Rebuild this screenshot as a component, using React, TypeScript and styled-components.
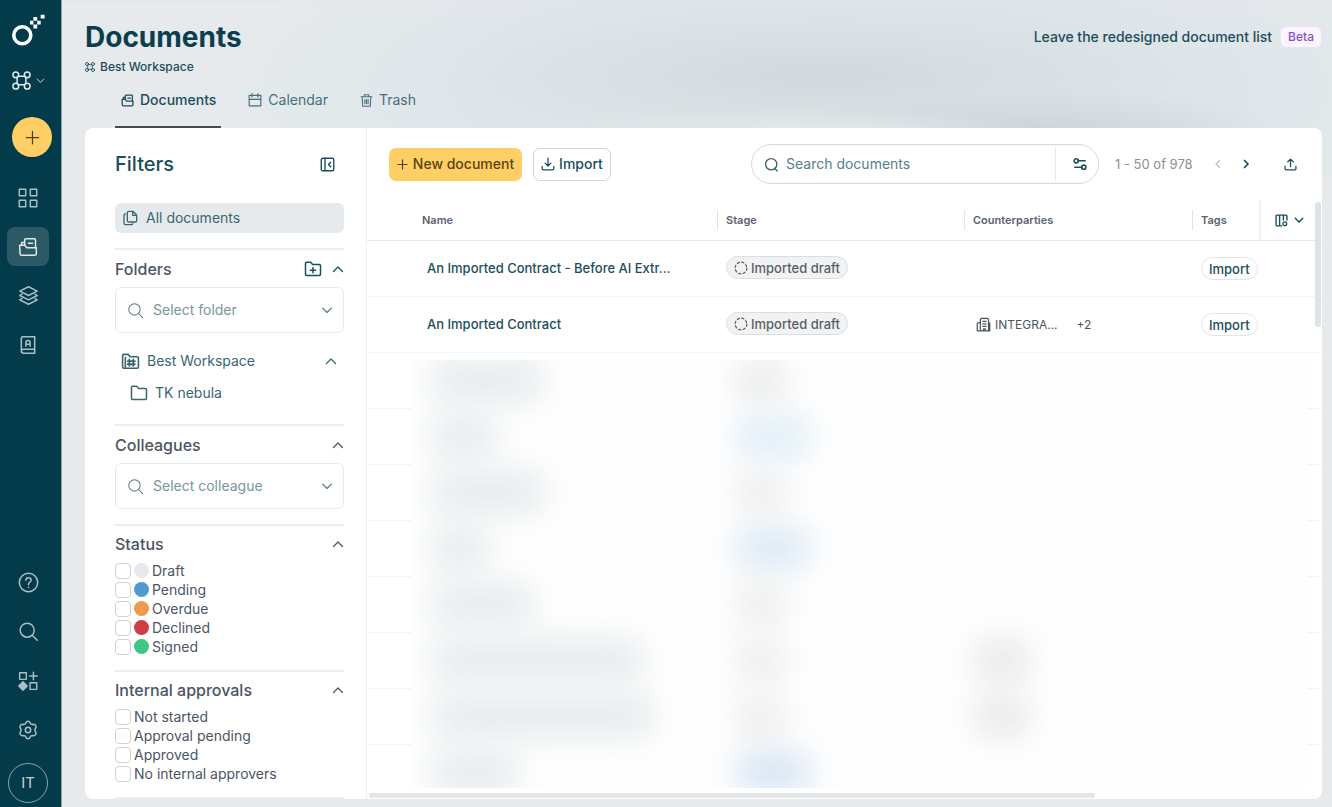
import React from "react";
import styled, { createGlobalStyle } from "styled-components";

const Global = createGlobalStyle`
  *, *::before, *::after { box-sizing: border-box; }
  body { margin: 0; background: #e6eaed; font-family: Inter, "Liberation Sans", sans-serif; font-size: 14px; line-height: 20px; color: #4b5563; }
  button, input, select { font: inherit; color: inherit; }
  button { padding: 0; border: 0; background: none; cursor: pointer; }
  h1, h2, h3 { margin: 0; }
  a { color: inherit; text-decoration: none; }
  svg { display: block; flex: none; }
`;

const teal = "#1b4d5b";

const Page = styled.div`
  display: flex;
  height: 100vh;
`;

const Sidebar = styled.nav`
  flex: none;
  width: 62px;
  display: flex;
  flex-direction: column;
  align-items: flex-start;
  padding: 12px 0 4px 7px;
  background: #043b4a;
  border-right: 1px solid #86a5ad;
  color: #a9c0c6;
`;

const LogoLink = styled.a`
  margin-left: 4px;
  color: #fff;
`;

const WorkspaceButton = styled.button`
  display: flex;
  align-items: center;
  gap: 5px;
  height: 24px;
  margin: 20px 0 25px 5px;
  color: #e1eaec;
`;

const CreateButton = styled.button`
  width: 40px;
  height: 40px;
  margin: 0 0 21px 5px;
  border-radius: 50%;
  display: grid;
  place-items: center;
  background: #ffcf66;
  color: #4a3f10;
`;

const NavItem = styled.a<{ $active?: boolean }>`
  width: 42px;
  height: 39px;
  margin-bottom: 10px;
  border-radius: 8px;
  display: grid;
  place-items: center;
  background: ${(p) => (p.$active ? "#2c5966" : "transparent")};
  color: ${(p) => (p.$active ? "#dfe9eb" : "inherit")};
`;

const Spacer = styled.div`
  flex: 1;
`;

const Avatar = styled.button`
  width: 40px;
  height: 40px;
  margin: 4px 0 0 1px;
  border: 1px solid #86a5ad;
  border-radius: 50%;
  font-size: 15px;
  color: #c3d2d6;
`;

const Main = styled.main`
  flex: 1;
  min-width: 0;
  display: flex;
  flex-direction: column;
  padding: 0 10px 8px 23px;
  border-top: 1px solid #e4e3f6;
  background:
    radial-gradient(ellipse 240px 26px at 58% 132px, #e4e9eb 0%, #e1e7e9aa 50%, #e0e6e800 100%),
    radial-gradient(ellipse 260px 44px at 76% 132px, #cbd4db 0%, #d0d8deaa 50%, #d5dde100 100%),
    radial-gradient(ellipse 360px 64px at 60% 74px, #d0d9de 0%, #d5dde199 50%, #dbe2e500 100%),
    radial-gradient(ellipse 640px 180px at 62% 84px, #d9e1e4 0%, #dee5e8 55%, #e6eaed00 100%),
    #e6eaed;
`;

const Header = styled.header`
  display: flex;
  justify-content: space-between;
  padding-top: 20px;
`;

const Title = styled.h1`
  font-size: 28px;
  line-height: 32px;
  font-weight: 700;
  color: #0b3f4e;
`;

const Crumb = styled.a`
  display: flex;
  align-items: center;
  gap: 5px;
  margin-top: 4px;
  font-size: 12px;
  line-height: 20px;
  font-weight: 500;
  color: ${teal};
`;

const Leave = styled.a`
  display: flex;
  align-items: center;
  gap: 8px;
  height: 32px;
  font-size: 14px;
  font-weight: 500;
  color: ${teal};
`;

const Beta = styled.span`
  padding: 0 7px;
  border: 1px solid #eedffb;
  border-radius: 6px;
  background: #faf5ff;
  font-size: 12px;
  color: #8b4fc8;
`;

const Tabs = styled.nav`
  display: flex;
  gap: 21px;
  height: 51px;
  padding-left: 30px;
`;

const Tab = styled.a<{ $active?: boolean }>`
  display: flex;
  align-items: center;
  gap: 6px;
  padding: 0 5px 3px 6px;
  border-bottom: 2px solid ${(p) => (p.$active ? "#3f4b50" : "transparent")};
  font-weight: ${(p) => (p.$active ? 500 : 400)};
  color: ${(p) => (p.$active ? teal : "#44707c")};
`;

const Card = styled.div`
  flex: 1;
  min-height: 0;
  display: flex;
  border-radius: 8px;
  overflow: hidden;
  background: #fff;
`;

const Filters = styled.aside`
  flex: none;
  width: 282px;
  padding: 16px 22px 0 30px;
  border-right: 1px solid #eef0f1;
  overflow: hidden;
`;

const FiltersHead = styled.div`
  display: flex;
  align-items: center;
  justify-content: space-between;
  height: 40px;
  padding-right: 9px;
  color: ${teal};
`;

const FiltersTitle = styled.h2`
  font-size: 20px;
  font-weight: 500;
`;

const AllDocs = styled.button`
  display: flex;
  align-items: center;
  gap: 8px;
  width: 100%;
  height: 30px;
  margin: 19px 0 15px;
  padding: 0 7px;
  border-radius: 6px;
  background: #e6eaed;
  color: #3a6672;
`;

const Section = styled.section<{ $list?: boolean }>`
  padding-bottom: ${(p) => (p.$list ? 14 : 15)}px;
  border-top: 2px solid #eceeef;
`;

const SectionHead = styled.div<{ $tight?: boolean }>`
  display: flex;
  align-items: center;
  justify-content: space-between;
  height: ${(p) => (p.$tight ? 35 : 37)}px;
  color: #4b5563;
`;

const SectionTitle = styled.h3`
  font-size: 16px;
  font-weight: 500;
`;

const HeadTools = styled.div`
  display: flex;
  align-items: center;
  gap: 10px;
  color: ${teal};
`;

const Combo = styled.label`
  display: flex;
  align-items: center;
  gap: 9px;
  height: 46px;
  padding: 0 10px 0 11px;
  border: 1px solid #e6e9ea;
  border-radius: 6px;
  color: #5f7f88;
`;

const ComboInput = styled.input`
  flex: 1;
  min-width: 0;
  padding: 0;
  border: 0;
  outline: 0;
  background: none;
  &::placeholder { color: #7a959d; opacity: 1; }
`;

const Tree = styled.ul`
  list-style: none;
  margin: 12px 0 0;
  padding: 0;
`;

const TreeRow = styled.li<{ $depth: number }>`
  display: flex;
  align-items: center;
  gap: 7px;
  height: 32px;
  padding: 0 7px 0 ${(p) => 6 + p.$depth * 9}px;
  color: #3a6672;
`;

const TreeLink = styled.a`
  flex: 1;
`;

const Check = styled.label`
  display: flex;
  align-items: center;
  gap: 3px;
  height: 19px;
  font-size: 14px;
  line-height: 19px;
`;

const Box = styled.input`
  appearance: none;
  width: 16px;
  height: 16px;
  margin: 0;
  border: 1px solid #ced2d6;
  border-radius: 4px;
  background: #fff;
`;

const Dot = styled.span<{ $color: string }>`
  width: 15px;
  height: 15px;
  border-radius: 50%;
  background: ${(p) => p.$color};
`;

const Content = styled.div`
  position: relative;
  flex: 1;
  min-width: 0;
  overflow: hidden;
`;

const Toolbar = styled.div`
  display: flex;
  align-items: center;
  height: 72px;
  padding: 0 24px 0 22px;
`;

const Primary = styled.button`
  display: flex;
  align-items: center;
  justify-content: center;
  gap: 5px;
  width: 133px;
  height: 33px;
  margin-right: 11px;
  border-radius: 7px;
  background: #ffcf66;
  font-weight: 500;
  color: #5a4310;
`;

const Secondary = styled.button`
  display: flex;
  align-items: center;
  justify-content: center;
  gap: 4px;
  width: 78px;
  height: 33px;
  border: 1px solid #cfd4d6;
  border-radius: 7px;
  font-weight: 500;
  color: ${teal};
`;

const Search = styled.div`
  display: flex;
  align-items: center;
  width: 348px;
  height: 40px;
  margin-left: auto;
  padding-left: 12px;
  border: 1px solid #d5d9db;
  border-radius: 20px;
  color: #3a6672;
`;

const SearchLabel = styled.label`
  display: flex;
  align-items: center;
  gap: 7px;
  flex: 1;
  min-width: 0;
`;

const SearchInput = styled(ComboInput)`
  &::placeholder { color: #55808b; }
`;

const SearchOptions = styled.button`
  width: 43px;
  height: 32px;
  display: grid;
  place-items: center;
  padding-right: 2px;
  padding-left: 8px;
  border-left: 1px solid #e6e8ea;
  color: ${teal};
`;

const Range = styled.span`
  width: 80px;
  margin-left: 16px;
  font-size: 13px;
  color: #8a9095;
  white-space: nowrap;
`;

const IconButton = styled.button<{ $gap: number; $muted?: boolean }>`
  width: 16px;
  height: 24px;
  margin-left: ${(p) => p.$gap}px;
  display: grid;
  place-items: center;
  color: ${(p) => (p.$muted ? "#b9bfc3" : teal)};
`;

const Table = styled.table`
  width: 100%;
  table-layout: fixed;
  border-collapse: separate;
  border-spacing: 0;
`;

const Th = styled.th<{ $first?: boolean; $w?: number }>`
  width: ${(p) => (p.$w ? `${p.$w}px` : "auto")};
  height: 41px;
  padding: 0 0 0 ${(p) => (p.$first ? 55 : 0)}px;
  border-bottom: 1px solid #e6e9ea;
  text-align: left;
  font-size: 11px;
  font-weight: 600;
  color: #5a6370;
`;

const ThLabel = styled.span`
  display: block;
  padding-left: 8px;
  border-left: 1px solid #e3e6e8;
`;

const ThTools = styled.button`
  display: flex;
  align-items: center;
  gap: 6px;
  width: 100%;
  height: 40px;
  padding-left: 14px;
  border-left: 2px solid #eff1f2;
  color: ${teal};
`;

const Td = styled.td<{ $pad?: number }>`
  height: 56px;
  padding: 0 0 0 ${(p) => p.$pad ?? 9}px;
  border-bottom: 1px solid #f3f5f5;
  font-size: 12px;
  white-space: nowrap;
`;

const DocLink = styled.a`
  font-size: 13px;
  font-weight: 500;
  color: ${teal};
`;

const Pill = styled.span<{ $tag?: boolean }>`
  display: inline-flex;
  align-items: center;
  gap: 3px;
  height: 23px;
  padding: 0 7px;
  border: 1px solid ${(p) => (p.$tag ? "#e3e6e8" : "#dcdfe1")};
  border-radius: 12px;
  background: ${(p) => (p.$tag ? "#fff" : "#f1f2f3")};
  font-size: 13px;
  font-weight: 500;
  color: ${(p) => (p.$tag ? teal : "#5a5f64")};
`;

const Party = styled.span`
  display: flex;
  align-items: center;
  gap: 4px;
  padding-left: 3px;
`;

const More = styled.span`
  margin-left: 15px;
`;

const Veil = styled.div`
  position: absolute;
  top: 232px;
  left: 45px;
  right: 14px;
  bottom: 11px;
  overflow: hidden;
  background: #fefefe;
`;

const VeilRow = styled.div`
  display: grid;
  grid-template-columns: minmax(0, 1fr) 247px 342px;
  align-items: center;
  height: 56px;
  margin-top: -8px;
  margin-bottom: 8px;
`;

const Smudge = styled.span<{ $w: number; $color: string; $indent?: number }>`
  width: ${(p) => p.$w}px;
  height: 40px;
  margin-left: ${(p) => p.$indent ?? 0}px;
  border-radius: 12px;
  background: ${(p) => p.$color};
  filter: blur(16px);
`;

const ScrollY = styled.div`
  position: absolute;
  top: 74px;
  right: 1px;
  width: 6px;
  height: 125px;
  border-radius: 3px;
  background: #e0e3e4;
`;

const ScrollX = styled.div`
  position: absolute;
  left: 2px;
  bottom: 1px;
  width: 76%;
  height: 5px;
  border-radius: 2px;
  background: #e3e5e6;
`;

type IconProps = { size?: number; w?: number; children: React.ReactNode };
const Icon = ({ size = 16, w = 2, children }: IconProps) => (
  <svg width={size} height={size} viewBox="0 0 24 24" fill="none" stroke="currentColor" strokeWidth={w} strokeLinecap="round" strokeLinejoin="round" aria-hidden="true">
    {children}
  </svg>
);

const Chevron = ({ dir, size = 12, w = 2.6 }: { dir: "up" | "down" | "left" | "right"; size?: number; w?: number }) => (
  <Icon size={size} w={w}>
    <path d={{ up: "M3 17l9-9 9 9", down: "M3 8l9 9 9-9", left: "M15 5l-7 7 7 7", right: "M9 5l7 7-7 7" }[dir]} />
  </Icon>
);

const Nodes = ({ size, w = 1.8 }: { size: number; w?: number }) => (
  <Icon size={size} w={w}>
    <circle cx="4.800" cy="4.800" r="3.600" /><circle cx="19.200" cy="4.800" r="3.600" />
    <circle cx="4.800" cy="19.200" r="3.600" /><circle cx="19.200" cy="19.200" r="3.600" />
    <path d="M8 6.500h8M8 17.500h8M6.500 8v8M17.500 8v8" />
  </Icon>
);

const Archive = ({ size, w = 1.8 }: { size: number; w?: number }) => (
  <Icon size={size} w={w}>
    <path d="M2 10h6l2.500 3H22v7q0 2-2 2H4.500Q2.500 22 2.400 20z" />
    <path d="M4.500 10V6.500H8M8 10V3.500Q8 2 9.500 2h10Q21 2 21 3.500V13M12.500 7.500h5" />
  </Icon>
);

const Magnifier = ({ size, w = 1.8 }: { size: number; w?: number }) => (
  <Icon size={size} w={w}><circle cx="10.500" cy="10.500" r="8" /><path d="M16.500 16.500L22 22" /></Icon>
);

const Logo = () => (
  <svg width="36" height="36" viewBox="0 0 36 36" aria-hidden="true">
    <circle cx="11.300" cy="23.300" r="8.500" fill="none" stroke="currentColor" strokeWidth="3.600" />
    <path fill="currentColor" d="M22.400 5h3.800v3.800h-3.800zM19 8.800h3.400v3.800H19zM26.200 8.800h3.500v3.800h-3.500zM22.400 12.600h3.800v3.800h-3.800zM29.700 2.700h3.900v3.900h-3.900z" />
  </svg>
);

const Plus = ({ size = 14, w = 2 }: { size?: number; w?: number }) => (
  <Icon size={size} w={w}><path d="M12 2v20M2 12h20" /></Icon>
);

const folder = "M2 19V4.500Q2 3 3.500 3H9l2.500 3h9Q22 6 22 7.500V19q0 1.500-1.500 1.500h-17Q2 20.500 2 19z";

const rows = [
  { name: "An Imported Contract - Before AI Extr...", party: false },
  { name: "An Imported Contract", party: true },
];

const hidden = [
  { name: 110, stage: "#e9eaea", sw: 48 },
  { name: 64, stage: "#deedf7", sw: 72 },
  { name: 112, stage: "#ecedee", sw: 48 },
  { name: 56, stage: "#d9e9f5", sw: 72 },
  { name: 100, stage: "#ecedec", sw: 48 },
  { name: 210, stage: "#ecedec", sw: 48, party: true },
  { name: 220, stage: "#ecedec", sw: 48, party: true },
  { name: 84, stage: "#d5e4f3", sw: 72 },
];

const statuses = [
  ["Draft", "#e6eaed"],
  ["Pending", "#4f9bd0"],
  ["Overdue", "#ed9a4c"],
  ["Declined", "#d03c48"],
  ["Signed", "#40c683"],
];

const approvals = ["Not started", "Approval pending", "Approved", "No internal approvers"];

const Picker = ({ label }: { label: string }) => (
  <Combo>
    <Magnifier size={17} w={1.5} />
    <ComboInput placeholder={label} aria-label={label} />
    <Chevron dir="down" w={2.2} />
  </Combo>
);

const Collapse = ({ label }: { label: string }) => (
  <button aria-label={`Collapse ${label}`}><Chevron dir="up" /></button>
);

export default function App() {
  return (
    <>
      <Global />
      <Page>
        <Sidebar>
          <LogoLink href="#" aria-label="Home"><Logo /></LogoLink>
          <WorkspaceButton aria-label="Switch workspace"><Nodes size={19} w={1.9} /><Chevron dir="down" size={9} w={2.4} /></WorkspaceButton>
          <CreateButton aria-label="Create"><Plus size={15} w={2} /></CreateButton>
          <NavItem href="#" aria-label="Dashboard">
            <Icon size={22} w={1.6}><path d="M2.500 2.500h7v7h-7zM14.500 2.500h7v7h-7zM2.500 14.500h7v7h-7zM14.500 14.500h7v7h-7z" /></Icon>
          </NavItem>
          <NavItem href="#" aria-label="Documents" $active><Archive size={20} /></NavItem>
          <NavItem href="#" aria-label="Templates">
            <Icon size={21} w={1.6}><path d="M12 2l10 5-10 5L2 7zM4.500 10.500L2 12l10 5 10-5-2.500-1.500M4.500 15.500L2 17l10 5 10-5-2.500-1.500" /></Icon>
          </NavItem>
          <NavItem href="#" aria-label="Contacts">
            <Icon size={20} w={1.8}>
              <path d="M4 19V4q0-2 2-2h14v20H7q-3 0-3-3 0-2 3-2h13" />
              <path d="M9.500 13.500V8.500q0-2 2.500-2t2.500 2v5M9.500 11h5" />
            </Icon>
          </NavItem>
          <Spacer />
          <NavItem href="#" aria-label="Help">
            <Icon size={21} w={1.7}><circle cx="12" cy="12" r="10.500" /><path d="M9 9.500q0-3 3-3t3 2.700q0 1.800-1.800 2.700Q12 12.600 12 14.500M12 17.500v.1" /></Icon>
          </NavItem>
          <NavItem href="#" aria-label="Search"><Magnifier size={21} w={1.7} /></NavItem>
          <NavItem href="#" aria-label="Apps">
            <Icon size={20} w={1.7}>
              <path d="M2 2h8v8H2zM14.500 14h8v8h-8zM18.500 1.500v9M14 6h9" />
              <path d="M6 13l5 5-5 5-5-5z" fill="currentColor" />
            </Icon>
          </NavItem>
          <NavItem href="#" aria-label="Settings">
            <Icon size={20} w={1.8}>
              <circle cx="12" cy="12" r="3.200" />
              <path d="M9.500 3.500Q10 1.500 12 1.500t2.500 2l.7 1.200 1.500.6 2-.1q2 .1 2.700 1.700.8 1.500-.4 3L20.300 12l.7 2.100q1.200 1.500.4 3-.7 1.600-2.700 1.700l-2-.1-1.500.6-.7 1.200q-.5 2-2.500 2t-2.500-2l-.7-1.200-1.500-.6-2 .1q-2-.1-2.700-1.700-.8-1.500.4-3l.7-2.100L3 9.900q-1.200-1.500-.4-3 .7-1.600 2.700-1.700l2 .1 1.500-.6z" />
            </Icon>
          </NavItem>
          <Avatar aria-label="Account">IT</Avatar>
        </Sidebar>
        <Main>
          <Header>
            <div>
              <Title>Documents</Title>
              <Crumb href="#"><Nodes size={10} w={2} />Best Workspace</Crumb>
            </div>
            <Leave href="#">Leave the redesigned document list<Beta>Beta</Beta></Leave>
          </Header>
          <Tabs>
            <Tab href="#" $active><Archive size={13} w={2.4} />Documents</Tab>
            <Tab href="#">
              <Icon size={14}><path d="M2 4h20v18H2zM2 11h20M7 1v6M17 1v6" /></Icon>Calendar
            </Tab>
            <Tab href="#">
              <Icon size={13}><path d="M2 5h20M8 5V1.500h8V5M4 5l1 17.500h14L20 5M9 10v8M12 10v8M15 10v8" /></Icon>Trash
            </Tab>
          </Tabs>
          <Card>
            <Filters>
              <FiltersHead>
                <FiltersTitle>Filters</FiltersTitle>
                <button aria-label="Hide filters">
                  <Icon size={15} w={2.2}><rect x="2" y="2" width="20" height="20" rx="2.500" /><path d="M8 2v20M17 8.500L13.500 12l3.500 3.500" /></Icon>
                </button>
              </FiltersHead>
              <AllDocs>
                <Icon size={16} w={2}><path d="M8 4q0-2 2-2h6.500L22 7.500V16q0 2-2 2H10q-2 0-2-2zM16 2v6h6M5 6Q3 6 3 8v12q0 2 2 2h9q2 0 2-1.500" /></Icon>
                All documents
              </AllDocs>
              <Section>
                <SectionHead>
                  <SectionTitle>Folders</SectionTitle>
                  <HeadTools>
                    <button aria-label="New folder"><Icon size={18} w={2}><path d={folder} /><path d="M12 10v7M8.500 13.500h7" /></Icon></button>
                    <Collapse label="Folders" />
                  </HeadTools>
                </SectionHead>
                <Picker label="Select folder" />
                <Tree>
                  <TreeRow $depth={0}>
                    <Icon size={19} w={2}><path d={folder} /><path d="M5.500 7v13" /><path d="M10.500 9.500v8M15.500 9.500v8M8.500 11.500h9M8.500 15.500h9" strokeWidth="2.300" /></Icon>
                    <TreeLink href="#">Best Workspace</TreeLink>
                    <Collapse label="Best Workspace" />
                  </TreeRow>
                  <TreeRow $depth={1}>
                    <Icon size={18} w={2}><path d={folder} /></Icon>
                    <TreeLink href="#">TK nebula</TreeLink>
                  </TreeRow>
                </Tree>
              </Section>
              <Section>
                <SectionHead><SectionTitle>Colleagues</SectionTitle><Collapse label="Colleagues" /></SectionHead>
                <Picker label="Select colleague" />
              </Section>
              <Section $list>
                <SectionHead $tight><SectionTitle>Status</SectionTitle><Collapse label="Status" /></SectionHead>
                {statuses.map(([s, c]) => (
                  <Check key={s}><Box type="checkbox" /><Dot $color={c} />{s}</Check>
                ))}
              </Section>
              <Section $list>
                <SectionHead $tight><SectionTitle>Internal approvals</SectionTitle><Collapse label="Internal approvals" /></SectionHead>
                {approvals.map((s) => (
                  <Check key={s}><Box type="checkbox" />{s}</Check>
                ))}
              </Section>
              <Section />
            </Filters>
            <Content>
              <Toolbar>
                <Primary><Plus size={11} w={2.6} />New document</Primary>
                <Secondary>
                  <Icon size={14} w={2.200}><path d="M12 2v13M7 10.500l5 5 5-5M2 16v3.500Q2 22 4.500 22h15q2.500 0 2.500-2.500V16" /></Icon>Import
                </Secondary>
                <Search>
                  <SearchLabel>
                    <Icon size={15} w={2.200}><circle cx="11.500" cy="11.500" r="9" /><path d="M17 18l4 4.500" /></Icon>
                    <SearchInput placeholder="Search documents" aria-label="Search documents" />
                  </SearchLabel>
                  <SearchOptions aria-label="Search options">
                    <Icon size={14} w={2.800}><circle cx="5.500" cy="6.500" r="3.500" /><path d="M9 6.500h12" /><circle cx="18.500" cy="17.500" r="3.500" /><path d="M3 17.500h12" /></Icon>
                  </SearchOptions>
                </Search>
                <Range>1 - 50 of 978</Range>
                <IconButton $gap={15} $muted aria-label="Previous page"><Chevron dir="left" /></IconButton>
                <IconButton $gap={12} aria-label="Next page"><Chevron dir="right" w={3.4} /></IconButton>
                <IconButton $gap={28} aria-label="Export">
                  <Icon size={13} w={2.300}><path d="M12 16V2M7 7l5-5 5 5M2 15v5q0 2 2 2h16q2 0 2-2v-5" /></Icon>
                </IconButton>
              </Toolbar>
              <Table>
                <thead>
                  <tr>
                    <Th $first>Name</Th>
                    <Th $w={247}><ThLabel>Stage</ThLabel></Th>
                    <Th $w={228}><ThLabel>Counterparties</ThLabel></Th>
                    <Th $w={67}><ThLabel>Tags</ThLabel></Th>
                    <Th $w={63}>
                      <ThTools aria-label="Configure columns">
                        <Icon size={13} w={2.600}><path d="M12 22H3.500Q2 22 2 20.500v-17Q2 2 3.500 2h17Q22 2 22 3.500V11M8.500 2v20M15.500 2v9" /><circle cx="18" cy="18" r="3.500" /></Icon>
                        <Chevron dir="down" size={10} w={3.4} />
                      </ThTools>
                    </Th>
                  </tr>
                </thead>
                <tbody>
                  {rows.map((r) => (
                    <tr key={r.name}>
                      <Td $pad={60}><DocLink href="#">{r.name}</DocLink></Td>
                      <Td>
                        <Pill>
                          <Icon size={14} w={2}><circle cx="12" cy="12" r="10" strokeDasharray="4 3.850" /></Icon>Imported draft
                        </Pill>
                      </Td>
                      <Td>
                        {r.party && (
                          <Party>
                            <Icon size={15} w={2}><path d="M7 22V3.500L9 2h9l2 1.500V22M7 9H4L2 11v11h20V10l-2-1M11 7h5M11 11h5M11 15h5M12 22v-3h3v3" /></Icon>
                            INTEGRA...<More>+2</More>
                          </Party>
                        )}
                      </Td>
                      <Td><Pill $tag>Import</Pill></Td>
                      <Td />
                    </tr>
                  ))}
                  {hidden.map((_, i) => (
                    <tr key={i}><Td colSpan={5} /></tr>
                  ))}
                </tbody>
              </Table>
              <Veil aria-hidden="true">
                {hidden.map((h, i) => (
                  <VeilRow key={i}>
                    <Smudge $w={h.name} $color="#e4eaec" $indent={20} />
                    <Smudge $w={h.sw} $color={h.stage} $indent={18} />
                    {h.party && <Smudge $w={52} $color="#e6e7e9" $indent={10} />}
                  </VeilRow>
                ))}
              </Veil>
              <ScrollY />
              <ScrollX />
            </Content>
          </Card>
        </Main>
      </Page>
    </>
  );
}
